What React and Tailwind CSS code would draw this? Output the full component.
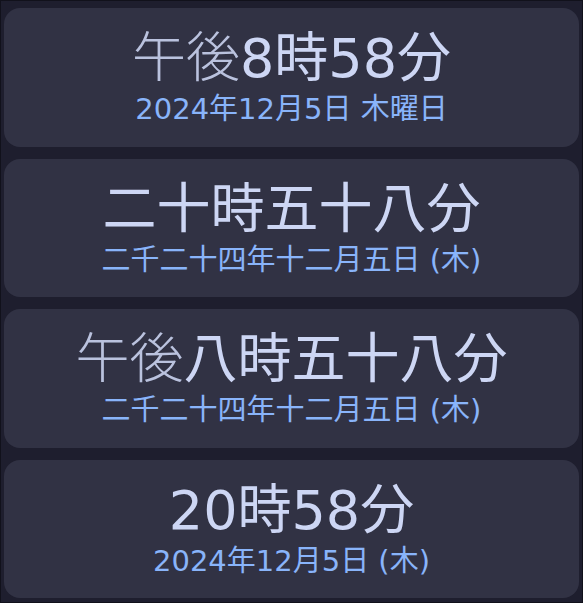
export default function App() {
  const cards = [
    { pre: "午後", main: "8時58分", date: "2024年12月5日 木曜日" },
    { pre: "", main: "二十時五十八分", date: "二千二十四年十二月五日 (木)" },
    { pre: "午後", main: "八時五十八分", date: "二千二十四年十二月五日 (木)" },
    { pre: "", main: "20時58分", date: "2024年12月5日 (木)" },
  ];
  return (
    <div className="w-[583px] h-[603px] bg-[#1e1e2e] border border-[#11111b] flex flex-col gap-3 pt-[7px] pb-1 px-[3px] font-['DejaVu_Sans','Noto_Sans_CJK_JP',sans-serif]">
      {cards.map((c, i) => (
        <div
          key={i}
          className="flex-1 rounded-2xl bg-[#313244] flex flex-col items-center justify-center gap-[9px] pt-[2px]"
        >
          <div className="text-[54px] leading-none text-[#cdd6f4] whitespace-nowrap">
            {c.pre && <span className="font-light text-[#bac2de]">{c.pre}</span>}
            <span>{c.main}</span>
          </div>
          <div className="text-[29px] leading-none text-[#89b4fa] whitespace-nowrap">
            {c.date}
          </div>
        </div>
      ))}
    </div>
  );
}
